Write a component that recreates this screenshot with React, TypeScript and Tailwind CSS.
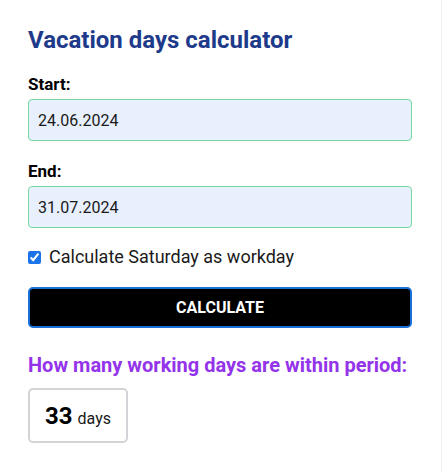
import React, { useState } from "react";

export default function App() {
  const [start, setStart] = useState("24.06.2024");
  const [end, setEnd] = useState("31.07.2024");
  const [saturday, setSaturday] = useState(true);

  return (
    <div className="min-h-screen w-[442px] border-r border-[#f0f0f0] bg-white font-['Roboto',sans-serif]">
      <div className="w-[384px] ml-[28px] pt-[24px]">
        <h1 className="text-[24px] leading-[32px] font-bold text-[#1e3a8a]">Vacation days calculator</h1>

        {/* Zeitraum */}
        <label className="block mt-[16px] text-[17px] leading-[24px] font-bold text-black">Start:</label>
        <input
          value={start}
          onChange={(e) => setStart(e.target.value)}
          className="block w-full h-[42px] mt-[3px] px-[9px] rounded-[4px] border border-[#74d99f] bg-[#e8f0fe] text-[16px] text-[#1a1a1a] outline-none"
        />

        <label className="block mt-[18px] text-[17px] leading-[24px] font-bold text-black">End:</label>
        <input
          value={end}
          onChange={(e) => setEnd(e.target.value)}
          className="block w-full h-[42px] mt-[3px] px-[9px] rounded-[4px] border border-[#74d99f] bg-[#e8f0fe] text-[16px] text-[#1a1a1a] outline-none"
        />

        <label className="flex items-center gap-[8px] mt-[17px] text-[18px] leading-[24px] text-[#1a1a1a]">
          <input
            type="checkbox"
            checked={saturday}
            onChange={(e) => setSaturday(e.target.checked)}
            className="w-[13px] h-[13px] m-0 accent-[#1a73e8]"
          />
          Calculate Saturday as workday
        </label>

        <button className="block w-full h-[41px] mt-[18px] rounded-[5px] border-2 border-[#1a6fd8] bg-black text-white text-[16px] font-bold uppercase">
          Calculate
        </button>

        {/* Ergebnis */}
        <h2 className="mt-[23px] text-[20px] leading-[28px] font-bold text-[#9333ea]">How many working days are within period:</h2>
        <div className="flex items-center justify-center w-[100px] h-[55px] mt-[9px] rounded-[5px] border-2 border-[#d4d4d8] bg-white">
          <span className="flex items-baseline gap-[5px]">
            <span className="text-[24px] font-bold text-black">33</span>
            <span className="text-[16px] text-[#1a1a1a]">days</span>
          </span>
        </div>
      </div>
    </div>
  );
}
